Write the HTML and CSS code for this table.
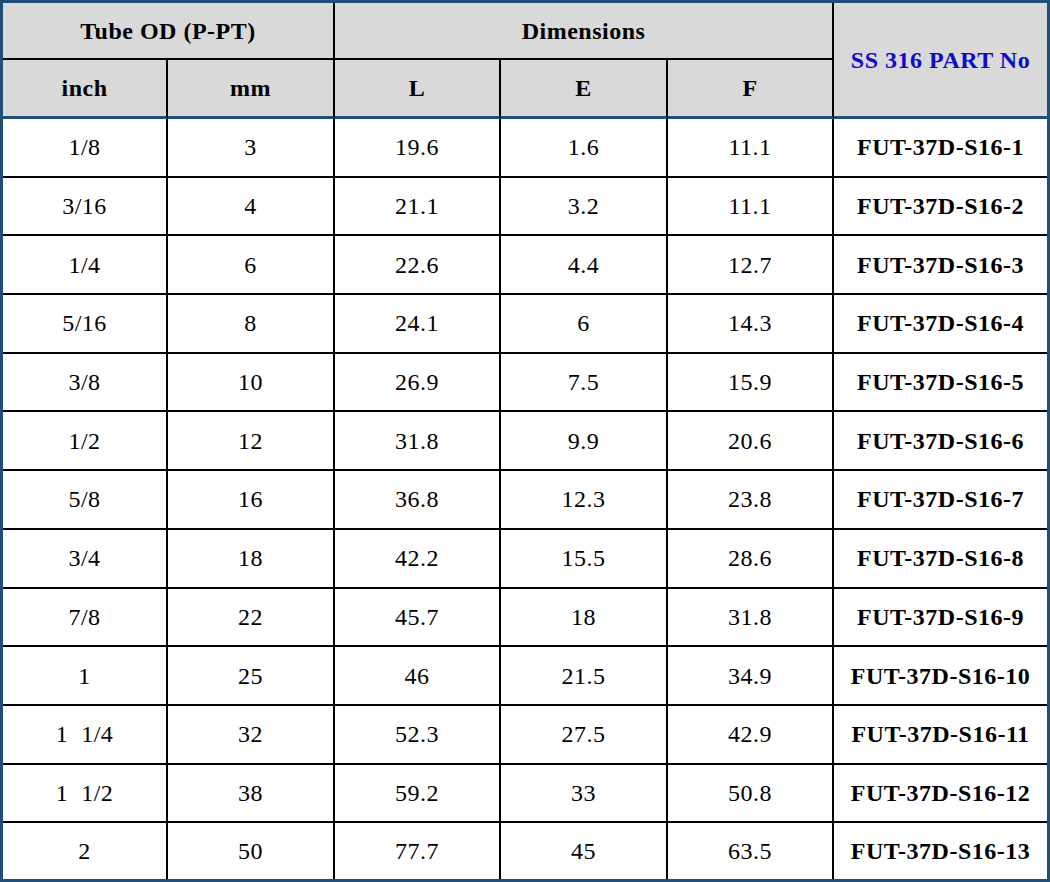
FILE: index.html
```html
<!DOCTYPE html>
<html>
<head>
<meta charset="utf-8">
<link rel="stylesheet" href="styles.css">
</head>
<body>
<table class="spec">
  <colgroup>
    <col class="c1"><col class="c2"><col class="c3"><col class="c4"><col class="c5"><col class="c6">
  </colgroup>
  <thead>
    <tr class="h1">
      <th colspan="2">Tube OD (P-PT)</th>
      <th colspan="3">Dimensions</th>
      <th rowspan="2" class="part-head last">SS 316 PART No</th>
    </tr>
    <tr class="h2">
      <th>inch</th><th>mm</th><th>L</th><th>E</th><th>F</th>
    </tr>
  </thead>
  <tbody>
    <tr><td>1/8</td><td>3</td><td>19.6</td><td>1.6</td><td>11.1</td><td class="part">FUT-37D-S16-1</td></tr>
    <tr><td>3/16</td><td>4</td><td>21.1</td><td>3.2</td><td>11.1</td><td class="part">FUT-37D-S16-2</td></tr>
    <tr><td>1/4</td><td>6</td><td>22.6</td><td>4.4</td><td>12.7</td><td class="part">FUT-37D-S16-3</td></tr>
    <tr><td>5/16</td><td>8</td><td>24.1</td><td>6</td><td>14.3</td><td class="part">FUT-37D-S16-4</td></tr>
    <tr><td>3/8</td><td>10</td><td>26.9</td><td>7.5</td><td>15.9</td><td class="part">FUT-37D-S16-5</td></tr>
    <tr><td>1/2</td><td>12</td><td>31.8</td><td>9.9</td><td>20.6</td><td class="part">FUT-37D-S16-6</td></tr>
    <tr><td>5/8</td><td>16</td><td>36.8</td><td>12.3</td><td>23.8</td><td class="part">FUT-37D-S16-7</td></tr>
    <tr><td>3/4</td><td>18</td><td>42.2</td><td>15.5</td><td>28.6</td><td class="part">FUT-37D-S16-8</td></tr>
    <tr><td>7/8</td><td>22</td><td>45.7</td><td>18</td><td>31.8</td><td class="part">FUT-37D-S16-9</td></tr>
    <tr><td>1</td><td>25</td><td>46</td><td>21.5</td><td>34.9</td><td class="part">FUT-37D-S16-10</td></tr>
    <tr><td>1&nbsp;&nbsp;1/4</td><td>32</td><td>52.3</td><td>27.5</td><td>42.9</td><td class="part">FUT-37D-S16-11</td></tr>
    <tr><td>1&nbsp;&nbsp;1/2</td><td>38</td><td>59.2</td><td>33</td><td>50.8</td><td class="part">FUT-37D-S16-12</td></tr>
    <tr class="final"><td>2</td><td>50</td><td>77.7</td><td>45</td><td>63.5</td><td class="part">FUT-37D-S16-13</td></tr>
  </tbody>
</table>
</body>
</html>
```

FILE: styles.css
```css
html, body {
  margin: 0;
  padding: 0;
  background: #ffffff;
}

.spec {
  width: 1050px;
  border-collapse: separate;
  border-spacing: 0;
  border: 3px solid #1f4e79;
  table-layout: fixed;
  font-family: "Liberation Serif", "Times New Roman", serif;
  font-size: 24px;
  letter-spacing: 0.5px;
  color: #000;
}

.c1 { width: 165px; }
.c2 { width: 167px; }
.c3 { width: 166px; }
.c4 { width: 167px; }
.c5 { width: 166px; }
.c6 { width: 213px; }

.spec th,
.spec td {
  padding: 0;
  text-align: center;
  vertical-align: middle;
  border-right: 2px solid #000;
  border-bottom: 2px solid #000;
  box-sizing: border-box;
  line-height: 1;
}

.spec th {
  background: #d9d9d9;
  font-weight: bold;
}

.spec .last,
.spec td.part {
  border-right: none;
}

.h1 { height: 57px; }
.h2 { height: 59px; }

.h2 th,
.spec th.part-head {
  border-bottom: 3px solid #1f4e79;
}

.part-head {
  color: #0d0dc8;
}

.spec tbody tr { height: 58.7px; }

.spec tbody tr.final { height: 55.6px; }

.spec tr.final td { border-bottom: none; }

.spec td.part {
  font-weight: bold;
}
```
